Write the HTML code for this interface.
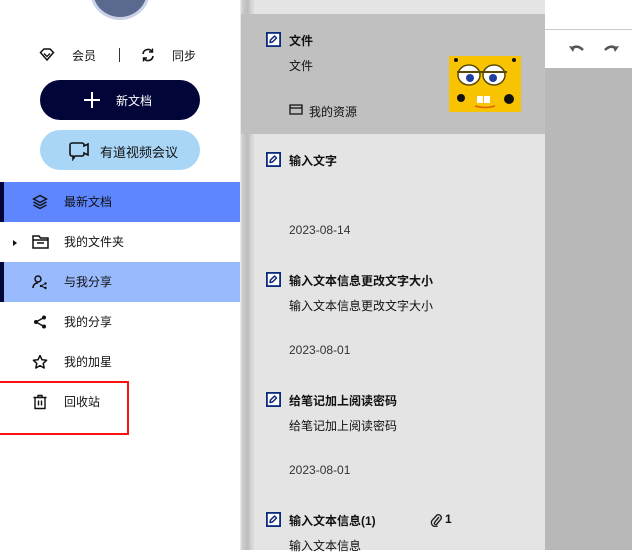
<!DOCTYPE html>
<html><head><meta charset="utf-8"><style>
*{margin:0;padding:0;box-sizing:border-box}
body{width:632px;height:550px;overflow:hidden;position:relative;background:#fff;font-family:"Liberation Sans","Noto Sans CJK SC",sans-serif;font-size:12px;color:#111}
.abs{position:absolute}
.side{left:0;top:0;width:240px;height:550px;background:#fff}
.nav{position:absolute;left:0;width:240px;height:40px;line-height:40px}
.nav span{position:absolute;left:64px}
.nav svg{position:absolute;left:32px;top:12px}
.list{left:254px;top:0;width:291px;height:550px;background:#e4e4e4}
.it{position:absolute;left:289px;font-size:12px}
.pen{position:absolute;left:266px}
.date{position:absolute;left:289px;color:#333;font-size:12px}
</style></head><body>
<svg width="0" height="0" style="position:absolute"><defs><symbol id="pen" viewBox="0 0 15 15"><rect x="0.9" y="0.9" width="13.2" height="13.2" fill="#fff" stroke="#0a2a7a" stroke-width="1.8"/><path d="M4 10.5l0.5-2.5 4-4 2 2-4 4z" fill="none" stroke="#0a2a7a" stroke-width="1.5" stroke-linejoin="round"/></symbol></defs></svg>
<div class="abs side">
  <div class="abs" style="left:90px;top:-38px;width:60px;height:58px;border-radius:50%;background:#5a6a8e;border:3px solid #c9d2e6"></div>
  <svg class="abs" style="left:39px;top:47px" width="16" height="16" viewBox="0 0 16 16"><path d="M1.5 5.5L5 2h6l3.5 3.5L8 13z" fill="none" stroke="#111" stroke-width="1.5"/><path d="M5 6.5l3 3 3-3" fill="none" stroke="#111" stroke-width="1.3"/></svg>
  <div class="abs" style="left:72px;top:47px">会员</div>
  <div class="abs" style="left:119px;top:48px;width:1px;height:14px;background:#333"></div>
  <svg class="abs" style="left:140px;top:47px" width="16" height="16" viewBox="0 0 16 16"><path d="M3 7a5 5 0 0 1 9-2.5M13 9a5 5 0 0 1-9 2.5" fill="none" stroke="#111" stroke-width="1.6"/><path d="M12.5 1.5v3.5h-3.5M3.5 14.5v-3.5h3.5" fill="none" stroke="#111" stroke-width="1.4"/></svg>
  <div class="abs" style="left:172px;top:47px">同步</div>
  <div class="abs" style="left:40px;top:80px;width:160px;height:40px;border-radius:20px;background:#020538;color:#fff">
    <div class="abs" style="left:44px;top:19px;width:16px;height:1.5px;background:#fff"></div>
    <div class="abs" style="left:51px;top:12px;width:1.5px;height:16px;background:#fff"></div>
    <div class="abs" style="left:76px;top:12px">新文档</div>
  </div>
  <div class="abs" style="left:40px;top:130px;width:160px;height:40px;border-radius:20px;background:#a9d6f6">
    <svg class="abs" style="left:29px;top:11px" width="22" height="20" viewBox="0 0 22 20"><path d="M3 2h10a2 2 0 0 1 2 2v1l4-2v11l-4-2v1a2 2 0 0 1-2 2H6l-2 3v-3H3a2 2 0 0 1-2-2V4a2 2 0 0 1 2-2z" fill="none" stroke="#111" stroke-width="1.6"/></svg>
    <div class="abs" style="left:60px;top:12px;font-size:13px">有道视频会议</div>
  </div>
  <div class="nav" style="top:182px;background:#5d86ff"><div class="abs" style="left:0;top:0;width:4px;height:40px;background:#020538"></div>
    <svg width="16" height="16" viewBox="0 0 16 16"><path d="M8 1.5l6.5 3.5L8 8.5 1.5 5z M1.5 8L8 11.5 14.5 8 M1.5 11L8 14.5 14.5 11" fill="none" stroke="#111" stroke-width="1.4"/></svg><span>最新文档</span></div>
  <div class="nav" style="top:222px"><div class="abs" style="left:13px;top:18px;width:0;height:0;border-left:4px solid #111;border-top:3px solid transparent;border-bottom:3px solid transparent"></div>
    <svg width="17" height="16" viewBox="0 0 17 16"><path d="M1 2h6l1.5 2H16v10H1z M1 6h15 M5 9h7" fill="none" stroke="#111" stroke-width="1.5"/></svg><span>我的文件夹</span></div>
  <div class="nav" style="top:262px;background:#9abafe"><div class="abs" style="left:0;top:0;width:4px;height:40px;background:#020538"></div>
    <svg width="16" height="16" viewBox="0 0 16 16"><circle cx="6" cy="5" r="3" fill="none" stroke="#111" stroke-width="1.5"/><path d="M1 14c0-3 2-5 5-5" fill="none" stroke="#111" stroke-width="1.5"/><circle cx="9" cy="12" r="1.2" fill="#111"/><circle cx="13.5" cy="9.5" r="1.2" fill="#111"/><circle cx="13.5" cy="14" r="1.2" fill="#111"/><path d="M9 12l4.5-2.5M9 12l4.5 2" stroke="#111" stroke-width="1"/></svg><span>与我分享</span></div>
  <div class="nav" style="top:302px"><svg width="16" height="16" viewBox="0 0 16 16"><circle cx="4" cy="8" r="2" fill="#111"/><circle cx="12" cy="3.5" r="2" fill="#111"/><circle cx="12" cy="12.5" r="2" fill="#111"/><path d="M4 8l8-4.5M4 8l8 4.5" stroke="#111" stroke-width="1.5"/></svg><span>我的分享</span></div>
  <div class="nav" style="top:342px"><svg width="16" height="16" viewBox="0 0 16 16"><path d="M8 1.5l2 4.3 4.6.5-3.4 3.1 1 4.6L8 11.7 3.8 14l1-4.6L1.4 6.3 6 5.8z" fill="none" stroke="#111" stroke-width="1.5" stroke-linejoin="round"/></svg><span>我的加星</span></div>
  <div class="nav" style="top:382px"><svg width="16" height="16" viewBox="0 0 16 16"><path d="M1.5 3.5h13 M6 3.5V1.5h4v2 M3 3.5v11h10v-11 M6.5 6.5v5 M9.5 6.5v5" fill="none" stroke="#111" stroke-width="1.4"/></svg><span>回收站</span></div>
  <div class="abs" style="left:-2px;top:381px;width:131px;height:54px;border:2.5px solid #ff1010"></div>
</div>
<div class="abs" style="left:240px;top:0;width:14px;height:550px;background:linear-gradient(90deg,#f2f2f2 0,#cfcfcf 2px,#c4c4c4 5px,#bcbcbc 8px,#d4d4d4 11px,#dcdcdc 14px)"></div>
<div class="abs list"></div>
<div class="abs" style="left:241px;top:14px;width:304px;height:120px;background:#c0c0c0"></div>
<svg class="pen" style="top:32px" width="15" height="15"><use href="#pen"/></svg><div class="it" style="top:32px;font-weight:bold">文件</div>
<div class="it" style="top:57px">文件</div>
<svg class="abs" style="left:289px;top:104px" width="14" height="11" viewBox="0 0 14 11"><path d="M1 1h12v9H1z M1 4h12" fill="none" stroke="#111" stroke-width="1.3"/></svg>
<div class="it" style="left:309px;top:103px">我的资源</div>
<svg class="abs" style="left:449px;top:56px" width="72" height="56" viewBox="0 0 72 56"><rect width="72" height="56" fill="#f8c300"/><ellipse cx="20" cy="19" rx="11" ry="10" fill="#fff" stroke="#5a4a00" stroke-width="1.5"/><ellipse cx="45" cy="19" rx="11" ry="10" fill="#fff" stroke="#5a4a00" stroke-width="1.5"/><circle cx="21" cy="22" r="4" fill="#2040a0"/><circle cx="44" cy="22" r="4" fill="#2040a0"/><path d="M8 16h50" stroke="#5a4a00" stroke-width="2"/><circle cx="12" cy="42" r="4" fill="#111"/><circle cx="60" cy="43" r="5" fill="#111"/><circle cx="7" cy="4" r="2" fill="#111"/><circle cx="65" cy="4" r="2" fill="#111"/><rect x="28" y="40" width="6" height="7" fill="#fff"/><rect x="35" y="40" width="6" height="7" fill="#fff"/><path d="M26 50q10 3 20 0" stroke="#e06000" stroke-width="1.5" fill="none"/></svg>
<svg class="pen" style="top:152px" width="15" height="15"><use href="#pen"/></svg><div class="it" style="top:152px;font-weight:bold">输入文字</div>
<div class="date" style="top:223px">2023-08-14</div>
<svg class="pen" style="top:272px" width="15" height="15"><use href="#pen"/></svg><div class="it" style="top:272px;font-weight:bold">输入文本信息更改文字大小</div>
<div class="it" style="top:297px">输入文本信息更改文字大小</div>
<div class="date" style="top:343px">2023-08-01</div>
<svg class="pen" style="top:392px" width="15" height="15"><use href="#pen"/></svg><div class="it" style="top:392px;font-weight:bold">给笔记加上阅读密码</div>
<div class="it" style="top:417px">给笔记加上阅读密码</div>
<div class="date" style="top:463px">2023-08-01</div>
<svg class="pen" style="top:512px" width="15" height="15"><use href="#pen"/></svg><div class="it" style="top:512px;font-weight:bold">输入文本信息(1)</div>
<svg class="abs" style="left:430px;top:513px" width="12" height="14" viewBox="0 0 12 14"><path d="M9 4L4.5 9.5a1.5 1.5 0 0 0 2 2L11 6a3 3 0 0 0-4-4L2 7.5a4 4 0 0 0 5.5 5.5" fill="none" stroke="#222" stroke-width="1.4"/></svg>
<div class="it" style="left:445px;top:512px;font-weight:bold">1</div>
<div class="it" style="top:537px">输入文本信息</div>
<div class="abs" style="left:545px;top:0;width:87px;height:550px;background:#b8b8b8"></div>
<div class="abs" style="left:545px;top:0;width:87px;height:68px;background:#fff"></div>
<div class="abs" style="left:545px;top:29px;width:87px;height:1px;background:#c8c8c8"></div>
<svg class="abs" style="left:569px;top:43px" width="16" height="12" viewBox="0 0 16 12"><path d="M2 6q6-5 12 1" fill="none" stroke="#555" stroke-width="2.5"/><path d="M0 3l4 6 2-5z" fill="#555"/></svg>
<svg class="abs" style="left:603px;top:43px" width="16" height="12" viewBox="0 0 16 12"><path d="M14 6Q8 1 2 7" fill="none" stroke="#555" stroke-width="2.5"/><path d="M16 3l-4 6-2-5z" fill="#555"/></svg>
</body></html>
